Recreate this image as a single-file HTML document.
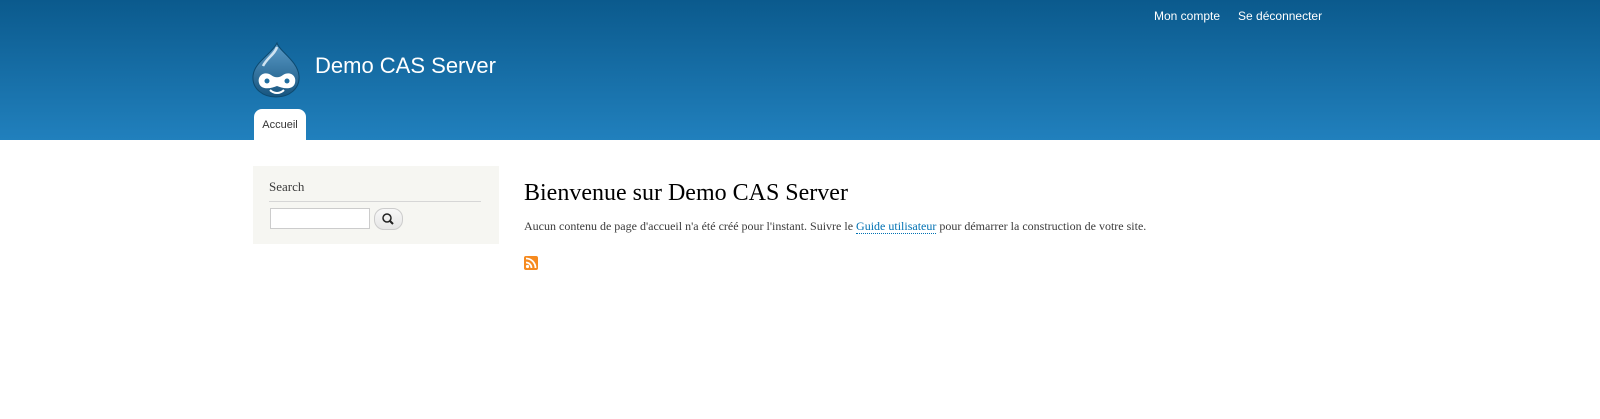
<!DOCTYPE html>
<html><head><meta charset="utf-8"><style>
body{margin:0;width:1600px;height:419px;background:#fff;font-family:"Liberation Serif",serif;overflow:hidden}
#hd{position:relative;height:140px;background:linear-gradient(#0b5a8d,#2180bd);}
#sec{position:absolute;top:9px;left:1154px;font:12px "Liberation Sans",sans-serif;color:#fff}
#sec span{margin-right:18px}
#logo{position:absolute;left:251px;top:42px}
#name{position:absolute;left:315px;top:53px;font:22px "Liberation Sans",sans-serif;color:#fff}
#tab{position:absolute;left:254px;top:109px;width:52px;height:31px;background:#fff;border-radius:8px 8px 0 0;font:11px "Liberation Sans",sans-serif;color:#333;text-align:center;line-height:32px}
#side{position:absolute;left:253px;top:166px;width:246px;height:78px;background:#f6f6f2}
#side h2{position:absolute;left:16px;top:13px;margin:0;font-weight:normal;font-size:13px;color:#3b3b3b;width:212px;border-bottom:1px solid #d6d6d6;padding-bottom:6px}
#inp{position:absolute;left:17px;top:42px;width:98px;height:19px;border:1px solid #ccc;background:#fff}
#btn{position:absolute;left:121px;top:42px;width:27px;height:20px;border:1px solid #ccc;border-radius:10px;background:linear-gradient(#f8f8f8,#e6e6e6)}
h1{position:absolute;left:524px;top:180px;margin:0;font-weight:normal;font-size:24px;color:#000}
#p{position:absolute;left:524px;top:219px;font-size:12px;color:#3b3b3b}
#p a{color:#0071b3;border-bottom:1px dotted #0071b3;text-decoration:none}
#rss{position:absolute;left:524px;top:256px;width:14px;height:14px;background:#f68a1f;border-radius:2px}
</style></head><body>
<div id="hd">
<div id="sec"><span>Mon compte</span><span>Se déconnecter</span></div>
<svg id="logo" width="50" height="56" viewBox="0 0 50 56"><defs><linearGradient id="g" x1="0" y1="0" x2="0" y2="1"><stop offset="0" stop-color="#5b9bc8"/><stop offset="1" stop-color="#17557f"/></linearGradient></defs><path d="M26 1 C28 9 47 19 48 34 C49 47 38 55 25 55 C12 55 1 47 2 34 C3 20 21 12 26 1Z" fill="url(#g)" stroke="#0d4a70" stroke-width="1"/><path d="M12 24 C16 16 24 12 26 5" stroke="#cfe3f1" stroke-width="2.5" fill="none"/><path d="M8 41 C6 33 14 29 20 33 C24 36 28 36 32 33 C38 29 46 33 44 41 C42 48 33 47 26 44 C19 47 10 48 8 41Z" fill="#fff"/><circle cx="16" cy="39" r="2.5" fill="#1f6ea0"/><circle cx="36" cy="39" r="2.5" fill="#1f6ea0"/><path d="M19 48 C23 52 29 52 33 48" stroke="#fff" stroke-width="2" fill="none"/></svg>
<div id="name">Demo CAS Server</div>
<div id="tab">Accueil</div>
</div>
<div id="side"><h2>Search</h2><div id="inp"></div><div id="btn"><svg width="27" height="20" viewBox="0 0 27 20"><circle cx="12" cy="9" r="4" fill="none" stroke="#222" stroke-width="1.5"/><path d="M15 12 L18 15" stroke="#222" stroke-width="2"/></svg></div></div>
<h1>Bienvenue sur Demo CAS Server</h1>
<div id="p">Aucun contenu de page d'accueil n'a été créé pour l'instant. Suivre le <a>Guide utilisateur</a> pour démarrer la construction de votre site.</div>
<svg id="rss" viewBox="0 0 14 14"><circle cx="3.5" cy="10.5" r="1.6" fill="#fff"/><path d="M2 6.5 A5.5 5.5 0 0 1 7.5 12" stroke="#fff" stroke-width="1.8" fill="none"/><path d="M2 2.5 A9.5 9.5 0 0 1 11.5 12" stroke="#fff" stroke-width="1.8" fill="none"/></svg>
</body></html>
